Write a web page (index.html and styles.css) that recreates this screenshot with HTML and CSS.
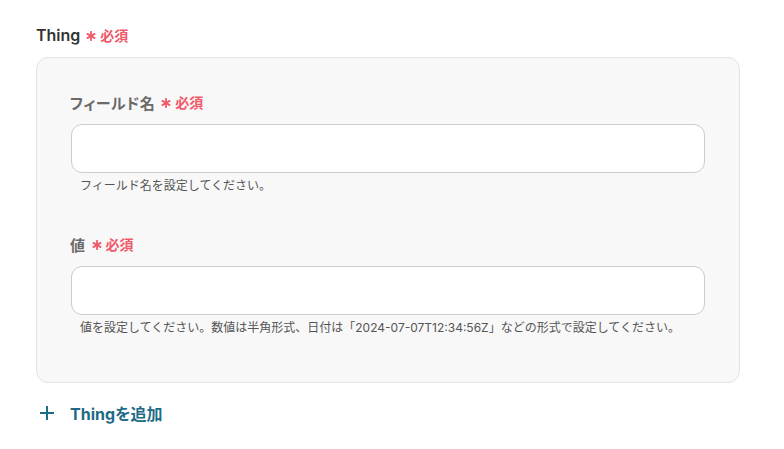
FILE: index.html
```html
<!DOCTYPE html>
<html lang="ja">
<head>
<meta charset="utf-8">
<link rel="stylesheet" href="styles.css">
</head>
<body>
<div class="page">
  <div class="title">
    <span class="title-text">Thing</span>
    <svg class="ast" viewBox="0 0 10 10" width="10" height="10"><g stroke="#f05a6a" stroke-width="1.8" stroke-linecap="round"><line x1="5" y1="0.8" x2="5" y2="9.2"/><line x1="1.4" y1="2.9" x2="8.6" y2="7.1"/><line x1="1.4" y1="7.1" x2="8.6" y2="2.9"/></g></svg>
    <span class="req">必須</span>
  </div>
  <div class="card">
    <div class="field">
      <div class="label">
        <span class="label-text">フィールド名</span>
        <svg class="ast" viewBox="0 0 10 10" width="10" height="10"><g stroke="#f05a6a" stroke-width="1.8" stroke-linecap="round"><line x1="5" y1="0.8" x2="5" y2="9.2"/><line x1="1.4" y1="2.9" x2="8.6" y2="7.1"/><line x1="1.4" y1="7.1" x2="8.6" y2="2.9"/></g></svg>
        <span class="req">必須</span>
      </div>
      <div class="input"></div>
      <div class="help">フィールド名を設定してください。</div>
    </div>
    <div class="field second">
      <div class="label">
        <span class="label-text">値</span>
        <svg class="ast" viewBox="0 0 10 10" width="10" height="10"><g stroke="#f05a6a" stroke-width="1.8" stroke-linecap="round"><line x1="5" y1="0.8" x2="5" y2="9.2"/><line x1="1.4" y1="2.9" x2="8.6" y2="7.1"/><line x1="1.4" y1="7.1" x2="8.6" y2="2.9"/></g></svg>
        <span class="req">必須</span>
      </div>
      <div class="input"></div>
      <div class="help">値を設定してください。数値は半角形式、日付は「2024-07-07T12:34:56Z」などの形式で設定してください。</div>
    </div>
  </div>
  <div class="add">
    <svg class="plus" viewBox="0 0 14 14" width="14" height="14"><g stroke="#1d6b84" stroke-width="2"><line x1="7" y1="0" x2="7" y2="14"/><line x1="0" y1="7" x2="14" y2="7"/></g></svg>
    <span class="add-text">Thingを追加</span>
  </div>
</div>
</body>
</html>
```

FILE: styles.css
```css
* { box-sizing: border-box; }
html, body { margin: 0; padding: 0; background: #fff; }
body {
  font-family: Inter, "Noto Sans CJK JP", "Noto Sans", sans-serif;
  font-feature-settings: "palt";
  width: 784px;
  height: 449px;
  overflow: hidden;
}
.page {
  padding: 24px 44px 0 36px;
}
.title {
  display: flex;
  align-items: center;
  height: 22px;
}
.title-text {
  font-size: 16px;
  font-weight: 600;
  color: #333;
}
.ast {
  margin-left: 6px;
  margin-right: 4px;
  margin-top: 2px;
}
.req {
  font-size: 14px;
  font-weight: 600;
  color: #f05a6a;
}
.card {
  margin-top: 11px;
  background: #f8f8f8;
  border: 1px solid #e3e3e5;
  border-radius: 12px;
  padding: 33px 34px 46px 33px;
}
.label {
  display: flex;
  align-items: center;
  height: 22px;
}
.label-text {
  font-size: 15px;
  font-weight: 700;
  letter-spacing: 0.5px;
  color: #6a6a6a;
}
.input {
  margin-top: 11px;
  margin-left: 1px;
  height: 49px;
  background: #fff;
  border: 1px solid #c9ccd3;
  border-radius: 11px;
}
.help {
  margin-top: 5px;
  padding-left: 10px;
  font-size: 12px;
  line-height: 16px;
  font-feature-settings: normal;
  color: #555;
}
.second {
  margin-top: 39px;
}
.add {
  margin-top: 19px;
  display: flex;
  align-items: center;
  height: 22px;
  padding-left: 4px;
}
.plus {
  margin-right: 16px;
}
.add-text {
  font-size: 16px;
  font-weight: 700;
  color: #1d6b84;
}
```
